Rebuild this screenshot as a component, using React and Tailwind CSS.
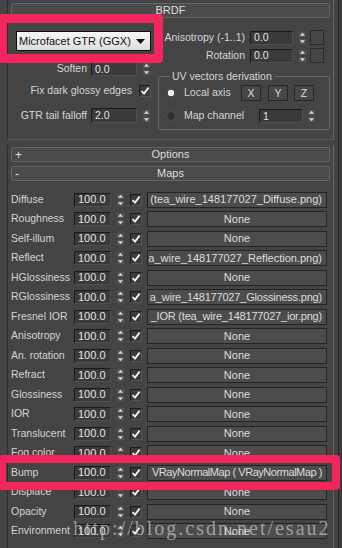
import React from "react";

const ROWS = [
  { label: "Diffuse", map: "(tea_wire_148177027_Diffuse.png)" },
  { label: "Roughness" },
  { label: "Self-illum" },
  { label: "Reflect", map: "a_wire_148177027_Reflection.png)" },
  { label: "HGlossiness" },
  { label: "RGlossiness", map: "a_wire_148177027_Glossiness.png)", track: "tracking-[-0.2px]" },
  { label: "Fresnel IOR", map: "_IOR (tea_wire_148177027_ior.png)", track: "tracking-[-0.2px]" },
  { label: "Anisotropy" },
  { label: "An. rotation" },
  { label: "Refract" },
  { label: "Glossiness" },
  { label: "IOR" },
  { label: "Translucent" },
  { label: "Fog color" },
  { label: "Bump", map: "VRayNormalMap ( VRayNormalMap )", track: "tracking-[-0.45px]" },
  { label: "Displace" },
  { label: "Opacity" },
  { label: "Environment" },
];

const Spinner = () => (
  <svg width="9" height="14" viewBox="0 0 9 14" className="shrink-0">
    <rect x="0" y="0" width="9" height="14" fill="#383838" />
    <rect x="0.5" y="0.5" width="8" height="6" fill="#525252" />
    <rect x="0.5" y="7.5" width="8" height="6" fill="#525252" />
    <path d="M4.5 1.8 L7 4.8 H2 Z" fill="#d8d8d8" />
    <path d="M2 9.2 H7 L4.5 12.2 Z" fill="#d8d8d8" />
  </svg>
);

const Check = () => (
  <div className="w-[12px] h-[12px] shrink-0 flex items-center justify-center bg-[#3b3b3b] border border-[#1c1c1c] border-r-[#555] border-b-[#555]">
    <svg width="10" height="10" viewBox="0 0 10 10">
      <path d="M1.5 5 L4 7.6 L8.6 1.6" stroke="#f4f4f4" strokeWidth="1.8" fill="none" />
    </svg>
  </div>
);

const Radio = ({ on }) => (
  <svg width="10" height="10" viewBox="0 0 10 10" className="shrink-0">
    <circle cx="5" cy="5" r="4.5" fill="#2f2f2f" stroke="#555" />
    {on && <circle cx="5" cy="5" r="3.2" fill="#f2f2f2" />}
  </svg>
);

// sunken numeric field
const Field = ({ className, children }) => (
  <div
    className={`flex items-center pl-[3px] shrink-0 bg-[#3a3a3a] border border-[#1a1a1a] border-r-[#505050] border-b-[#505050] text-[#e4e4e4] leading-none ${className}`}
  >
    {children}
  </div>
);

const Header = ({ sign, title }) => (
  <div className="mx-[3px] h-[15px] grid grid-cols-[20px_1fr_20px] items-center bg-[#4a4a4a] border border-[#636363] rounded-[2px] text-[#dedede] leading-none">
    <span className="pl-[3px] text-[12px]">{sign}</span>
    <span className="text-center">{title}</span>
    <span />
  </div>
);

const Btn = ({ children, className }) => (
  <div
    className={`flex items-center justify-center shrink-0 bg-[#474747] border border-[#262626] text-[#dcdcdc] leading-none ${className}`}
  >
    {children}
  </div>
);

const MapRow = ({ label, map, track }) => (
  <div className="h-[19.5px] flex items-center pl-[3px]">
    <div className="w-[63px] shrink-0 whitespace-nowrap text-[10.5px] text-[#d4d4d4]">{label}</div>
    <Field className="w-[37px] h-[14px]">100.0</Field>
    <div className="ml-[5px]">
      <Spinner />
    </div>
    <div className="ml-[5px]">
      <Check />
    </div>
    <div
      className={`ml-[5px] w-[180px] h-[16px] flex items-center overflow-hidden whitespace-nowrap bg-[#4c4c4c] border border-[#242424] text-[#dcdcdc] leading-none ${
        map ? "justify-end pr-[4px]" : "justify-center"
      } ${track || ""}`}
    >
      <span className="shrink-0">{map || "None"}</span>
    </div>
  </div>
);

export default function App() {
  return (
    <div className="w-[342px] h-[548px] relative overflow-hidden flex bg-[#444444] font-['Liberation_Sans',Arial,sans-serif] text-[11px] text-[#d6d6d6]">
      <div className="w-[334px] shrink-0 flex flex-col">
        {/* BRDF rollout */}
        <div className="ml-[7px] h-[140px] shrink-0 pt-[3px] border-l border-r border-b border-l-[#2c2c2c] border-r-[#666] border-b-[#5a5a5a]">
          <Header title="BRDF" />
          <div className="flex text-[10.5px]">
            {/* left column */}
            <div className="w-[143px] flex flex-col">
              <div className="mt-[13px] ml-[8px] w-[135px] h-[20px] flex items-center justify-between px-[2px] bg-gradient-to-b from-[#f7f7f7] to-[#dedede] border border-[#0e0e0e] text-[#111] text-[11px]">
                <span>Microfacet GTR (GGX)</span>
                <svg width="9" height="5" viewBox="0 0 9 5" className="mr-[3px]">
                  <path d="M0 0 H9 L4.5 5 Z" fill="#111" />
                </svg>
              </div>
              <div className="mt-[11px] h-[14px] flex items-center justify-end">
                <span className="mr-[4px]">Soften</span>
                <Field className="w-[46px] h-[14px]">0.0</Field>
                <div className="ml-[5px]">
                  <Spinner />
                </div>
              </div>
              <div className="mt-[8px] h-[13px] flex items-center justify-end">
                <span className="mr-[7px]">Fix dark glossy edges</span>
                <Check />
              </div>
              <div className="mt-[11px] h-[15px] flex items-center justify-end">
                <span className="mr-[4px]">GTR tail falloff</span>
                <Field className="w-[46px] h-[15px]">2.0</Field>
                <div className="ml-[5px]">
                  <Spinner />
                </div>
              </div>
            </div>

            {/* right column */}
            <div className="ml-[7px] w-[172px] flex flex-col">
              <div className="mt-[12px] h-[15px] flex items-center justify-end pr-[6px]">
                <span className="mr-[5px] whitespace-nowrap">Anisotropy (-1..1)</span>
                <Field className="w-[43px] h-[14px]">0.0</Field>
                <div className="ml-[5px]">
                  <Spinner />
                </div>
                <div className="ml-[3px] w-[14px] h-[15px] border border-[#2a2a2a] bg-[#464646]" />
              </div>
              <div className="mt-[3px] h-[15px] flex items-center justify-end pr-[6px]">
                <span className="mr-[5px]">Rotation</span>
                <Field className="w-[43px] h-[14px]">0.0</Field>
                <div className="ml-[5px]">
                  <Spinner />
                </div>
                <div className="ml-[3px] w-[14px] h-[15px] border border-[#2a2a2a] bg-[#464646]" />
              </div>
              <fieldset className="mt-[7px] border border-[#686868] rounded-[2px] pl-[7px] pr-[15px] pb-[5px]">
                <legend className="ml-[4px] px-[2px] leading-[13px]">UV vectors derivation</legend>
                <div className="mt-[2px] h-[16px] flex items-center">
                  <Radio on />
                  <span className="ml-[8px]">Local axis</span>
                  <div className="ml-auto flex">
                    <Btn className="w-[20px] h-[16px]">X</Btn>
                    <Btn className="ml-[7px] w-[20px] h-[16px]">Y</Btn>
                    <Btn className="ml-[6px] w-[20px] h-[16px]">Z</Btn>
                  </div>
                </div>
                <div className="mt-[7px] h-[16px] flex items-center">
                  <Radio />
                  <span className="ml-[8px]">Map channel</span>
                  <Field className="ml-auto w-[44px] h-[14px]">1</Field>
                  <div className="ml-[4px] mr-[-2px]">
                    <Spinner />
                  </div>
                </div>
              </fieldset>
            </div>
          </div>
        </div>

        {/* Options rollout (collapsed) */}
        <div className="ml-[7px] mt-[5px] pt-[2px] pb-[2px] shrink-0 border-l border-r border-l-[#2c2c2c] border-r-[#666]">
          <Header sign="+" title="Options" />
        </div>

        {/* Maps rollout */}
        <div className="ml-[7px] flex-1 pt-[2px] border-l border-r border-l-[#2c2c2c] border-r-[#666]">
          <Header sign="-" title="Maps" />
          <div className="pt-[9px] flex flex-col">
            {ROWS.map((r) => (
              <MapRow key={r.label} label={r.label} map={r.map} track={r.track} />
            ))}
          </div>
        </div>
      </div>

      {/* scroll gutter */}
      <div className="flex-1 flex bg-[#3c3c3c]">
        <div className="w-[4px] bg-[#424242]" />
        <div className="w-[1px] bg-[#232323]" />
      </div>

      {/* annotation highlights */}
      <div className="absolute left-[-2px] top-[14px] w-[165px] h-[49px] border-[9px] border-[#f2255c] rounded-[4px]" />
      <div className="absolute left-[-2px] top-[455px] w-[342px] h-[35px] border-[8px] border-[#f2255c] rounded-[4px]" />

      {/* watermark */}
      <div className="absolute left-[73px] top-[518px] font-['Liberation_Serif',serif] text-[20px] tracking-[2px] leading-none text-[#d0d0d0]/65 whitespace-nowrap">
        http://blog.csdn.net/esau2
      </div>
    </div>
  );
}
